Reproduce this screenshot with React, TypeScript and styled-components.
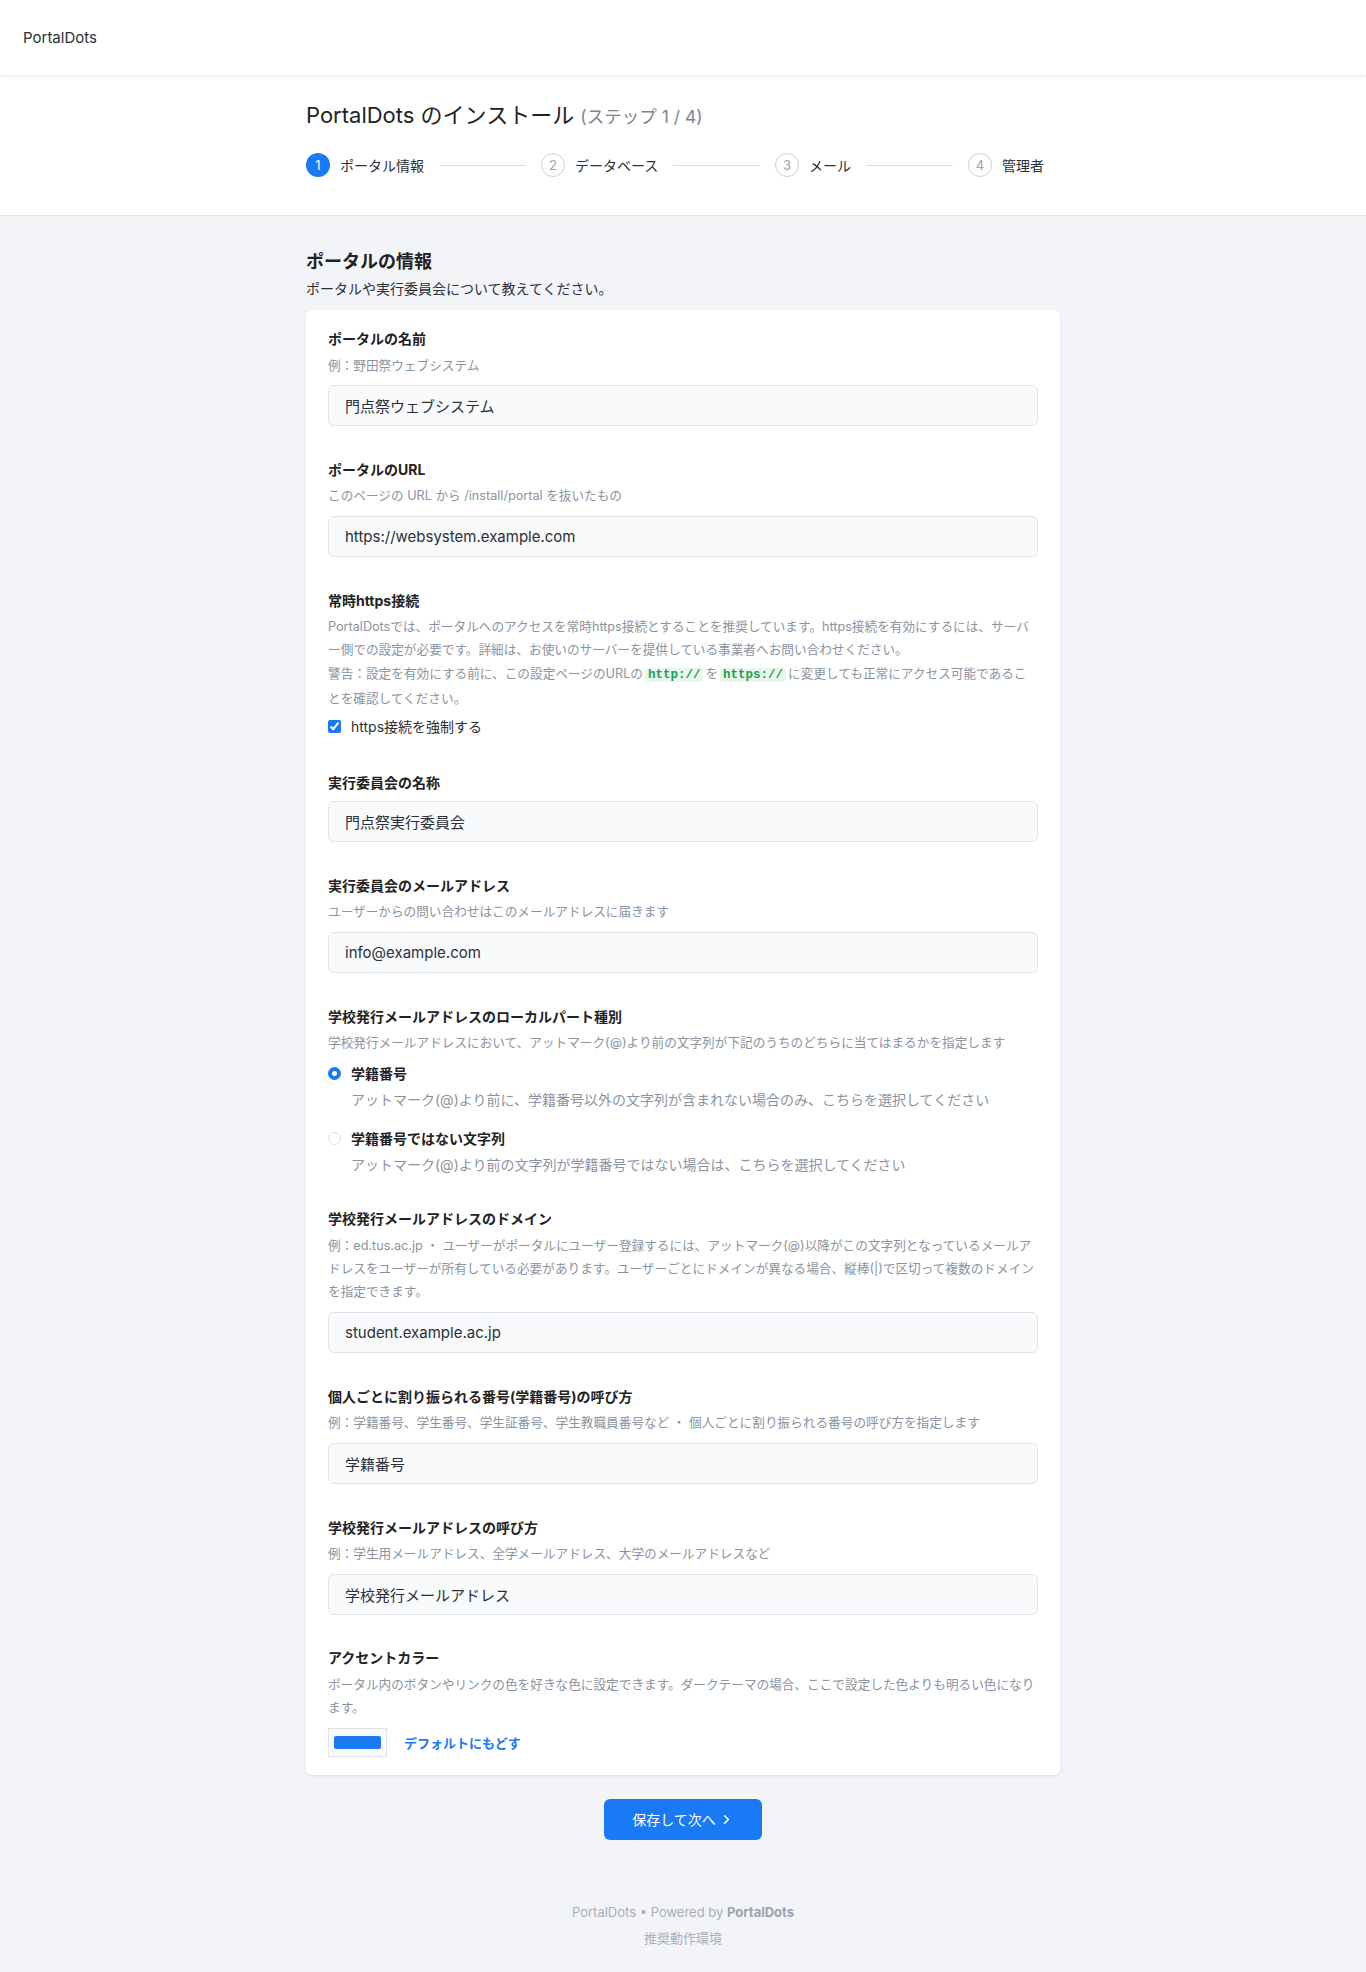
import React from 'react';
import styled, { createGlobalStyle } from 'styled-components';
import { ChevronRight } from 'lucide-react';

const primary = '#1a7af5';
const text = '#2b2f36';
const muted = '#8b939f';
const border = '#dfe3ea';
const bg = '#f3f4f8';

const GlobalStyle = createGlobalStyle`
  body {
    margin: 0;
    background: ${bg};
    color: ${text};
    font-family: "Inter", "Noto Sans CJK JP", sans-serif;
  }
  * { box-sizing: border-box; }
`;

const Navbar = styled.header`
  height: 75px;
  background: #fff;
  display: flex;
  align-items: center;
  padding: 0 23px;
  font-size: 15px;
  color: ${text};
  box-shadow: 0 1px 4px rgba(0, 0, 0, 0.1);
  position: relative;
  z-index: 1;
`;

const Header = styled.section`
  background: #fff;
  border-bottom: 1px solid #e3e7ee;
  padding: 25px 0 38px;
`;

const Container = styled.div`
  width: 754px;
  margin: 0 auto;
`;

const Title = styled.h1`
  margin: 0;
  font-size: 22px;
  font-weight: 400;
  line-height: 31px;
  color: #222;
`;

const TitleSub = styled.span`
  font-size: 17.5px;
  color: #7d8591;
`;

const Stepper = styled.ol`
  list-style: none;
  margin: 21px 0 0;
  padding: 0;
  display: flex;
  align-items: center;
  width: 738px;
`;

const Step = styled.li`
  display: flex;
  align-items: center;
  gap: 10px;
  font-size: 14px;
  color: ${text};
  white-space: nowrap;
`;

const StepCircle = styled.span<{ $active?: boolean }>`
  width: 24px;
  height: 24px;
  border-radius: 50%;
  display: flex;
  align-items: center;
  justify-content: center;
  font-size: 13px;
  background: ${(p) => (p.$active ? primary : '#fff')};
  color: ${(p) => (p.$active ? '#fff' : '#9aa3af')};
  border: ${(p) => (p.$active ? 'none' : '1.5px solid #c8d0da')};
`;

const StepLine = styled.li`
  flex: 1;
  height: 1px;
  background: #d7dde5;
  margin: 0 15px;
`;

const Main = styled.main`
  padding-top: 33px;
`;

const SectionTitle = styled.h2`
  margin: 0;
  font-size: 18px;
  font-weight: 700;
  line-height: 25px;
  color: #222;
`;

const SectionLead = styled.p`
  margin: 4px 0 0;
  font-size: 14px;
  line-height: 22px;
`;

const Card = styled.div`
  margin-top: 10px;
  background: #fff;
  border-radius: 6px;
  box-shadow: 0 1px 3px rgba(20, 30, 50, 0.1);
  padding: 18px 22px 18px;
  display: flex;
  flex-direction: column;
  gap: 32.5px;
`;

const Field = styled.div`
  display: flex;
  flex-direction: column;
`;

const Label = styled.label`
  font-size: 14px;
  font-weight: 700;
  line-height: 21px;
  color: #222;
`;

const Help = styled.p`
  margin: 4.5px 0 0;
  font-size: 12.65px;
  line-height: 23.3px;
  color: ${muted};
`;

const Code = styled.code`
  font-family: "Liberation Mono", "DejaVu Sans Mono", monospace;
  font-weight: 700;
  font-size: 12.5px;
  color: #1f9d4c;
  background: #e9f6ed;
  border-radius: 4px;
  padding: 0 3px;
  margin: 0 2px;
`;

const TextInput = styled.input`
  margin-top: 8.5px;
  height: 41px;
  width: 100%;
  border: 1px solid ${border};
  border-radius: 6px;
  background: #f9fafb;
  padding: 0 16px;
  font-family: inherit;
  font-size: 15px;
  color: ${text};
  outline: 0;
`;

const CheckRow = styled.label`
  margin: 6px 0 2px;
  display: flex;
  align-items: center;
  gap: 10px;
  font-size: 14px;
  line-height: 21px;
`;

const Checkbox = styled.input`
  margin: 0;
  width: 13px;
  height: 13px;
  accent-color: ${primary};
`;

const RadioList = styled.div`
  margin-top: 9px;
  display: flex;
  flex-direction: column;
  gap: 17.5px;
`;

const RadioOption = styled.label`
  display: grid;
  grid-template-columns: 13px 1fr;
  column-gap: 10px;
  row-gap: 4.5px;
  align-items: center;
`;

const Radio = styled.input`
  appearance: none;
  margin: 0;
  width: 13px;
  height: 13px;
  border-radius: 50%;
  border: 1px solid #d9dde3;
  background: #fff;

  &:checked {
    border: 4px solid ${primary};
  }
`;

const RadioTitle = styled.span`
  font-size: 14px;
  font-weight: 700;
  line-height: 21px;
  color: #222;
`;

const RadioDesc = styled.span`
  grid-column: 2;
  font-size: 14px;
  line-height: 22px;
  color: ${muted};
`;

const ColorRow = styled.div`
  margin-top: 8.5px;
  display: flex;
  align-items: center;
  gap: 17px;
`;

const Swatch = styled.div`
  width: 59px;
  height: 29px;
  border: 1px solid ${border};
  background: #f9fafb;
  padding: 7px 5px;
`;

const SwatchColor = styled.div<{ $color: string }>`
  width: 100%;
  height: 100%;
  border-radius: 2px;
  background: ${(p) => p.$color};
`;

const LinkButton = styled.a`
  font-size: 13px;
  font-weight: 700;
  color: ${primary};
  text-decoration: none;
  cursor: pointer;
`;

const Actions = styled.div`
  display: flex;
  justify-content: center;
  margin-top: 24px;
`;

const PrimaryButton = styled.button`
  width: 158px;
  height: 41px;
  border: 0;
  border-radius: 6px;
  background: ${primary};
  color: #fff;
  font-family: inherit;
  font-size: 14px;
  display: flex;
  align-items: center;
  justify-content: center;
  gap: 3px;
  cursor: pointer;
`;

const Footer = styled.footer`
  margin-top: 59px;
  padding-bottom: 22px;
  text-align: center;
  font-size: 13px;
  line-height: 26px;
  color: #a7afbb;
`;

const FooterStrong = styled.strong`
  font-weight: 700;
  color: #9ba4b1;
`;

const steps = ['ポータル情報', 'データベース', 'メール', '管理者'];

const TextField: React.FC<{ label: string; help?: string; value: string }> = ({ label, help, value }) => (
  <Field>
    <Label>{label}</Label>
    {help && <Help>{help}</Help>}
    <TextInput type="text" defaultValue={value} />
  </Field>
);

export default function App() {
  return (
    <>
      <GlobalStyle />
      <Navbar>PortalDots</Navbar>
      <Header>
        <Container>
          <Title>
            PortalDots のインストール <TitleSub>(ステップ 1 / 4)</TitleSub>
          </Title>
          <Stepper>
            {steps.map((s, i) => (
              <React.Fragment key={s}>
                <Step>
                  <StepCircle $active={i === 0}>{i + 1}</StepCircle>
                  {s}
                </Step>
                {i < steps.length - 1 && <StepLine />}
              </React.Fragment>
            ))}
          </Stepper>
        </Container>
      </Header>
      <Main>
        <Container>
          <SectionTitle>ポータルの情報</SectionTitle>
          <SectionLead>ポータルや実行委員会について教えてください。</SectionLead>
          <Card>
            <TextField label="ポータルの名前" help="例：野田祭ウェブシステム" value="門点祭ウェブシステム" />
            <TextField
              label="ポータルのURL"
              help="このページの URL から /install/portal を抜いたもの"
              value="https://websystem.example.com"
            />
            <Field>
              <Label>常時https接続</Label>
              <Help>
                PortalDotsでは、ポータルへのアクセスを常時https接続とすることを推奨しています。https接続を有効にするには、サーバー側での設定が必要です。詳細は、お使いのサーバーを提供している事業者へお問い合わせください。
                <br />
                警告：設定を有効にする前に、この設定ページのURLの<Code>http://</Code>を<Code>https://</Code>に変更しても正常にアクセス可能であることを確認してください。
              </Help>
              <CheckRow>
                <Checkbox type="checkbox" defaultChecked />
                https接続を強制する
              </CheckRow>
            </Field>
            <TextField label="実行委員会の名称" value="門点祭実行委員会" />
            <TextField
              label="実行委員会のメールアドレス"
              help="ユーザーからの問い合わせはこのメールアドレスに届きます"
              value="info@example.com"
            />
            <Field>
              <Label>学校発行メールアドレスのローカルパート種別</Label>
              <Help>学校発行メールアドレスにおいて、アットマーク(@)より前の文字列が下記のうちのどちらに当てはまるかを指定します</Help>
              <RadioList>
                <RadioOption>
                  <Radio type="radio" name="localpart" defaultChecked />
                  <RadioTitle>学籍番号</RadioTitle>
                  <RadioDesc>アットマーク(@)より前に、学籍番号以外の文字列が含まれない場合のみ、こちらを選択してください</RadioDesc>
                </RadioOption>
                <RadioOption>
                  <Radio type="radio" name="localpart" />
                  <RadioTitle>学籍番号ではない文字列</RadioTitle>
                  <RadioDesc>アットマーク(@)より前の文字列が学籍番号ではない場合は、こちらを選択してください</RadioDesc>
                </RadioOption>
              </RadioList>
            </Field>
            <TextField
              label="学校発行メールアドレスのドメイン"
              help="例：ed.tus.ac.jp ・ ユーザーがポータルにユーザー登録するには、アットマーク(@)以降がこの文字列となっているメールアドレスをユーザーが所有している必要があります。ユーザーごとにドメインが異なる場合、縦棒(|)で区切って複数のドメインを指定できます。"
              value="student.example.ac.jp"
            />
            <TextField
              label="個人ごとに割り振られる番号(学籍番号)の呼び方"
              help="例：学籍番号、学生番号、学生証番号、学生教職員番号など ・ 個人ごとに割り振られる番号の呼び方を指定します"
              value="学籍番号"
            />
            <TextField
              label="学校発行メールアドレスの呼び方"
              help="例：学生用メールアドレス、全学メールアドレス、大学のメールアドレスなど"
              value="学校発行メールアドレス"
            />
            <Field>
              <Label>アクセントカラー</Label>
              <Help>ポータル内のボタンやリンクの色を好きな色に設定できます。ダークテーマの場合、ここで設定した色よりも明るい色になります。</Help>
              <ColorRow>
                <Swatch>
                  <SwatchColor $color={primary} />
                </Swatch>
                <LinkButton>デフォルトにもどす</LinkButton>
              </ColorRow>
            </Field>
          </Card>
          <Actions>
            <PrimaryButton type="button">
              保存して次へ
              <ChevronRight size={15} strokeWidth={2.5} />
            </PrimaryButton>
          </Actions>
        </Container>
        <Footer>
          PortalDots • Powered by <FooterStrong>PortalDots</FooterStrong>
          <br />
          推奨動作環境
        </Footer>
      </Main>
    </>
  );
}
